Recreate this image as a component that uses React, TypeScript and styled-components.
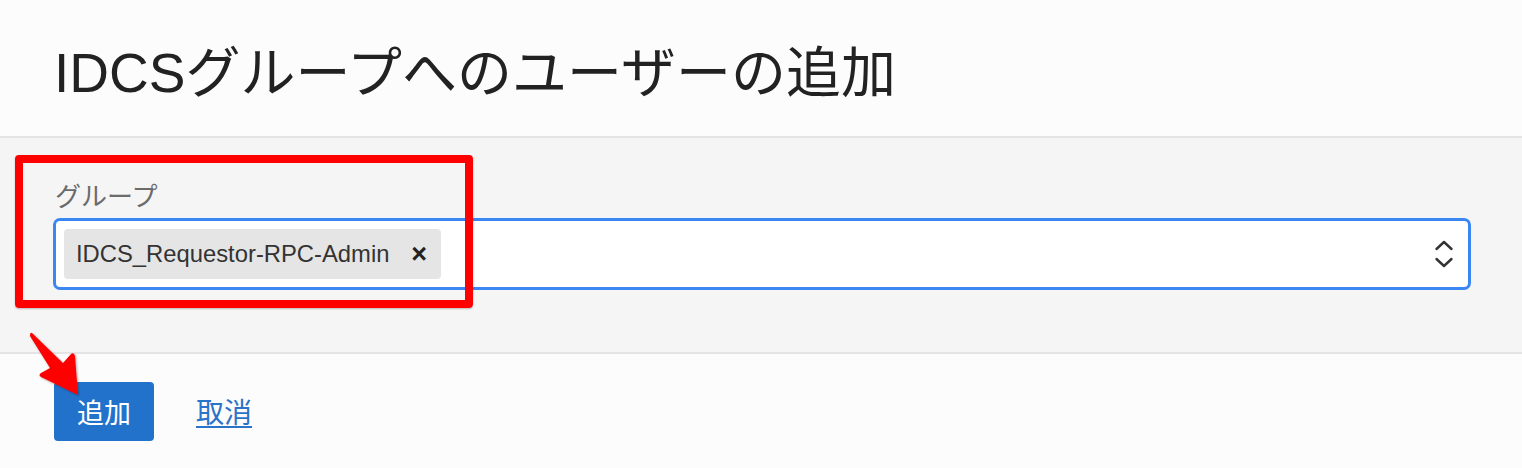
import styled, { createGlobalStyle } from "styled-components";

const GlobalStyle = createGlobalStyle`
  html, body {
    margin: 0;
    padding: 0;
    background: #fcfcfc;
  }
  body {
    font-family: "Liberation Sans", "Noto Sans CJK JP", sans-serif;
  }
`;

const Page = styled.div`
  position: relative;
  width: 1522px;
  height: 468px;
  display: flex;
  flex-direction: column;
  overflow: hidden;
`;

const Header = styled.header`
  flex: none;
  display: flex;
  align-items: center;
  padding-left: 54px;
  background: #fcfcfc;
  border-bottom: 2px solid #e4e4e4;
  box-sizing: border-box;
  height: 138px;
`;

const Title = styled.h1`
  margin: 0;
  font-size: 55px;
  font-weight: 400;
  color: #222;
`;

const Body = styled.section`
  flex: none;
  height: 216px;
  box-sizing: border-box;
  padding: 44px 51px 0 53px;
  background: #f5f5f5;
  border-bottom: 2px solid #e4e4e4;
`;

const Label = styled.div`
  font-size: 26px;
  line-height: 30px;
  color: #6b6b6b;
  margin-left: 2px;
`;

const SelectBox = styled.div`
  margin-top: 6px;
  height: 72px;
  box-sizing: border-box;
  border: 3px solid #3a86f2;
  border-radius: 7px;
  background: #fff;
  display: flex;
  align-items: center;
  padding: 0 14px 0 8px;
`;

const Chip = styled.div`
  height: 50px;
  width: 377px;
  box-sizing: border-box;
  display: flex;
  align-items: center;
  justify-content: space-between;
  padding: 0 14px 0 12px;
  background: #e5e5e5;
  border-radius: 4px;
  font-size: 23.8px;
  color: #333;
`;

const Remove = styled.span`
  font-size: 27px;
  line-height: 1;
  font-weight: 700;
  color: #222;
`;

const Spacer = styled.div`
  flex: 1;
`;

const Footer = styled.footer`
  flex: 1;
  display: flex;
  align-items: flex-start;
  gap: 42px;
  padding: 28px 0 0 54px;
  background: #fcfcfc;
`;

const PrimaryButton = styled.button`
  width: 100px;
  height: 59px;
  border: none;
  border-radius: 4px;
  background: #2272cc;
  color: #fff;
  font-family: "Noto Sans CJK JP", sans-serif;
  font-size: 27px;
  padding: 0;
`;

const CancelLink = styled.a`
  margin-top: 12px;
  font-family: "Noto Sans CJK JP", sans-serif;
  font-size: 28px;
  line-height: 34px;
  color: #2b73c8;
  text-decoration: underline;
  text-underline-offset: 3px;
`;

const Highlight = styled.div`
  position: absolute;
  left: 15px;
  top: 155px;
  width: 458px;
  height: 153px;
  box-sizing: border-box;
  border: 8px solid #ff0000;
  border-radius: 4px;
  box-shadow: 0 1px 2px rgba(0, 0, 0, 0.25);
  pointer-events: none;
`;

const ArrowMark = styled.svg`
  position: absolute;
  left: 20px;
  top: 325px;
  width: 70px;
  height: 80px;
  pointer-events: none;
`;

const Chevrons = () => (
  <svg width="20" height="32" viewBox="0 0 20 32" fill="none">
    <path d="M2.5 11 L10 4 L17.5 11" stroke="#333" strokeWidth="2.4" strokeLinecap="round" strokeLinejoin="round" />
    <path d="M2.5 21 L10 28 L17.5 21" stroke="#333" strokeWidth="2.4" strokeLinecap="round" strokeLinejoin="round" />
  </svg>
);

const App = () => {
  return (
    <>
      <GlobalStyle />
      <Page>
        <Header>
          <Title>IDCSグループへのユーザーの追加</Title>
        </Header>
        <Body>
          <Label>グループ</Label>
          <SelectBox>
            <Chip>
              <span>IDCS_Requestor-RPC-Admin</span>
              <Remove>×</Remove>
            </Chip>
            <Spacer />
            <Chevrons />
          </SelectBox>
        </Body>
        <Footer>
          <PrimaryButton>追加</PrimaryButton>
          <CancelLink href="#">取消</CancelLink>
        </Footer>
        <Highlight />
        <ArrowMark viewBox="0 0 70 80">
          <defs>
            <filter id="arrowShadow" x="-20%" y="-20%" width="140%" height="140%">
              <feDropShadow dx="1" dy="1" stdDeviation="1" floodColor="#000" floodOpacity="0.35" />
            </filter>
          </defs>
          <path
            d="M12 8 L43 38 L51 29 Q54 27 55 31 L58 70 L21 52 Q18 50 21 48 L30 43 L10 11 Q10 7 12 8 Z"
            fill="#f00"
            filter="url(#arrowShadow)"
          />
        </ArrowMark>
      </Page>
    </>
  );
};

export default App;
